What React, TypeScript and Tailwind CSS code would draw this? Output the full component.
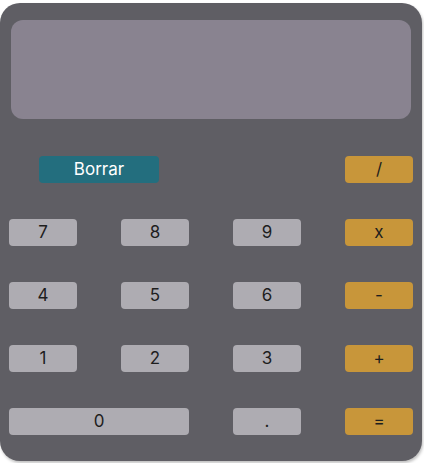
const keys: { label: string; kind: "num" | "op"; wide?: boolean }[] = [
  { label: "7", kind: "num" },
  { label: "8", kind: "num" },
  { label: "9", kind: "num" },
  { label: "x", kind: "op" },
  { label: "4", kind: "num" },
  { label: "5", kind: "num" },
  { label: "6", kind: "num" },
  { label: "-", kind: "op" },
  { label: "1", kind: "num" },
  { label: "2", kind: "num" },
  { label: "3", kind: "num" },
  { label: "+", kind: "op" },
  { label: "0", kind: "num", wide: true },
  { label: ".", kind: "num" },
  { label: "=", kind: "op" },
];

export default function App() {
  return (
    <div className="w-[424px] h-[463px] bg-white pt-[3px] font-['Inter',sans-serif]">
      <div className="w-[422px] h-[458px] bg-[#5f5e64] rounded-[20px] shadow-[1px_2px_3px_rgba(0,0,0,0.25)] pt-[17px] px-[9px]">
        {/* pantalla */}
        <div className="mx-[2px] h-[99px] bg-[#898390] rounded-[12px]" />

        <div className="grid grid-cols-[repeat(4,68px)] gap-x-[44px] gap-y-[36px] mt-[37px]">
          <div className="col-span-2 flex justify-center">
            <button className="w-[120px] h-[27px] rounded-[4px] bg-[#236e7e] text-white text-[17px]">
              Borrar
            </button>
          </div>
          <div />
          <button className="h-[27px] rounded-[4px] bg-[#c8963a] text-[#1e1e1e] text-[17px]">/</button>

          {keys.map((k) => (
            <button
              key={k.label}
              className={
                "h-[27px] rounded-[4px] text-[#1e1e1e] text-[17px] " +
                (k.kind === "op" ? "bg-[#c8963a]" : "bg-[#aeacb2]") +
                (k.wide ? " col-span-2" : "")
              }
            >
              {k.label}
            </button>
          ))}
        </div>
      </div>
    </div>
  );
}
